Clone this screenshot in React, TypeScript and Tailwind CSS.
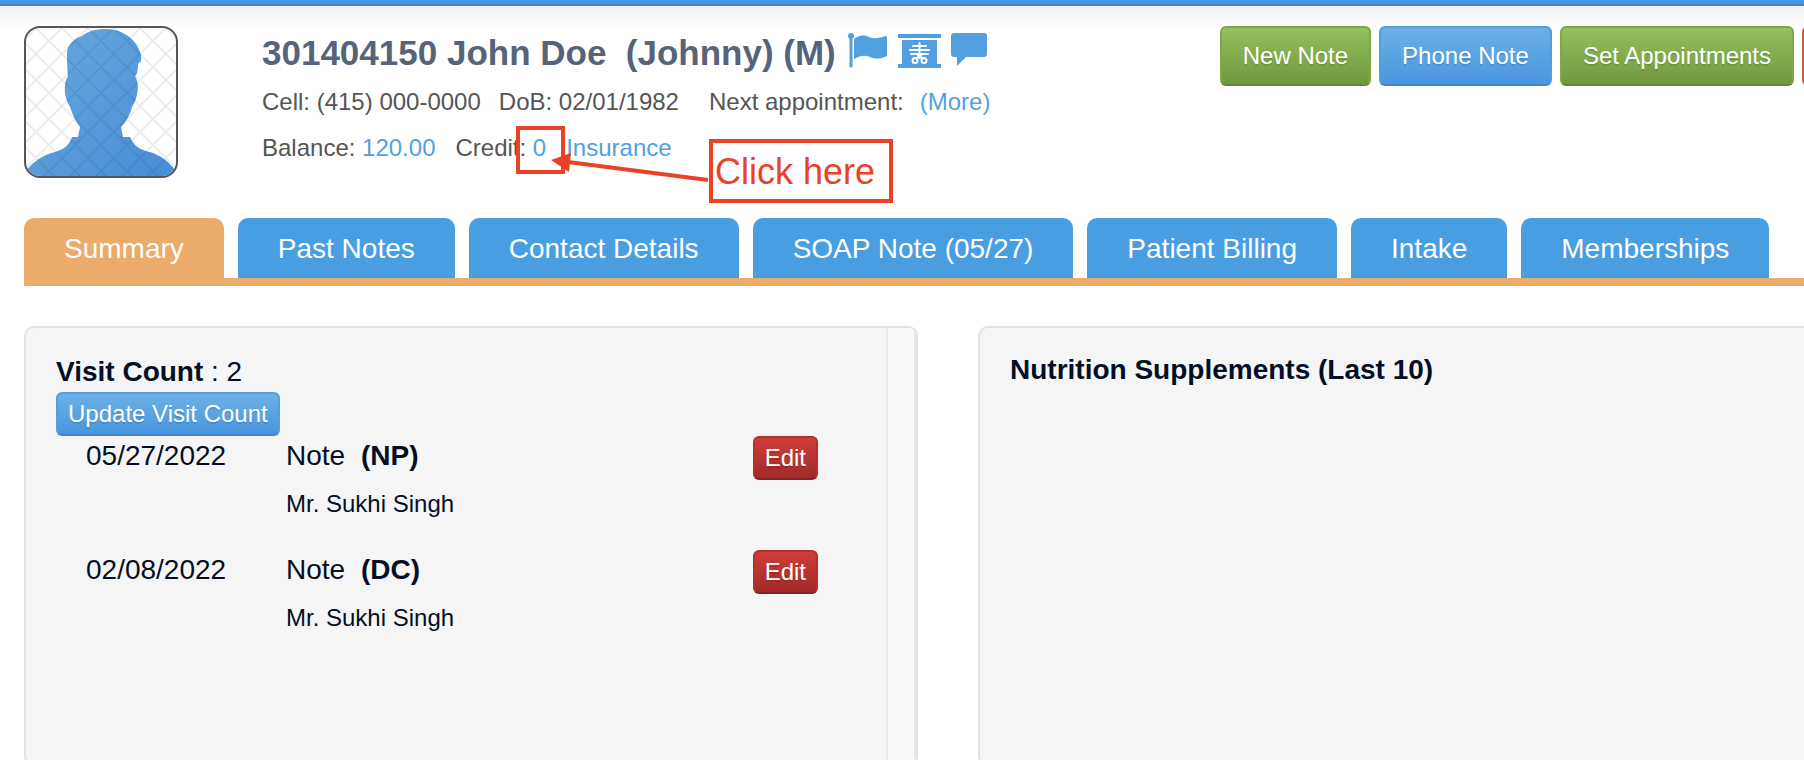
// src/App.tsx
import { useState } from 'react';
import type { ReactNode } from 'react';

const tabs = [
  'Summary',
  'Past Notes',
  'Contact Details',
  'SOAP Note (05/27)',
  'Patient Billing',
  'Intake',
  'Memberships',
];

const visits = [
  { date: '05/27/2022', type: 'NP', provider: 'Mr. Sukhi Singh' },
  { date: '02/08/2022', type: 'DC', provider: 'Mr. Sukhi Singh' },
];

const colors = {
  green: 'border-[#7ea64a] border-b-[#63843b] from-[#96c05d] to-[#70973f]',
  blue: 'border-[#529fe0] border-b-[#3f86cc] from-[#6db0e6] to-[#4896de]',
  red: 'border-[#b5302d] border-b-[#862220] from-[#d03d3a] to-[#a02a28]',
  orange: 'border-[#d2602c] border-b-[#a84620] from-[#e0703f] to-[#c4521f]',
};

interface ActionButtonProps {
  color: keyof typeof colors;
  size?: 'sm' | 'lg';
  label?: string;
  children?: ReactNode;
}

function ActionButton({ color, size = 'lg', label, children }: ActionButtonProps) {
  const sizing = size === 'lg' ? 'h-[60px] min-w-[70px] px-[21px]' : 'h-11 px-[10px]';
  return (
    <button
      type="button"
      aria-label={label}
      className={`shrink-0 whitespace-nowrap rounded-md border-2 bg-linear-to-b text-2xl leading-8 text-white text-shadow-[0_2px_0_rgba(0,0,0,0.12)] ${sizing} ${colors[color]}`}
    >
      {children}
    </button>
  );
}

function Avatar() {
  return (
    <div className="h-[152px] w-[154px] shrink-0 overflow-hidden rounded-2xl border-2 border-[#555555] bg-white">
      <svg viewBox="0 0 150 148" className="h-full w-full" role="img" aria-label="Patient photo">
        <defs>
          <linearGradient id="avatarFill" x1="0" y1="0" x2="1" y2="1">
            <stop offset="0" stopColor="#67a9de" />
            <stop offset="1" stopColor="#478dd6" />
          </linearGradient>
          <pattern id="avatarGrid" width="26" height="26" patternUnits="userSpaceOnUse" x="10" y="0">
            <path d="M0 0L26 26M26 0L0 26" stroke="#000" strokeOpacity="0.07" strokeWidth="2" />
          </pattern>
        </defs>
        <path
          d="M1 148V142C8 133 17 127 29 124C39 121 43 117 46 109H52L54 99C49 93 46 85 44 79C38 70 37 55 42 48C41 40 41 30 41 24C42 15 50 10 56 8C63 2 72 1 80 1C92 1 104 7 110 16C114 22 116 29 115 33L112 36C112 42 111 47 109 48C114 56 112 70 106 79C104 87 100 94 95 99L97 109H104C108 118 114 122 124 124C136 128 143 134 149 142V148Z"
          fill="url(#avatarFill)"
        />
        <rect width="150" height="148" fill="url(#avatarGrid)" />
      </svg>
    </div>
  );
}

function FlagIcon() {
  return (
    <svg viewBox="0 0 40 36" className="h-9 w-10" fill="currentColor" aria-hidden="true">
      <circle cx="3" cy="3" r="3" />
      <rect x="1.5" y="3" width="3" height="31.5" rx="1" />
      <path d="M6 6C10 3 15 1 21 4C27 6.500 32 5 37 3Q39 2.500 39 5V23C33 26 28 26.500 22 24C16 21.500 11 23 6 26Z" />
    </svg>
  );
}

function XrayIcon() {
  return (
    <svg viewBox="0 0 43 36" className="h-9 w-[43px]" aria-hidden="true">
      <path d="M0 1H43V5H0ZM4 7H39V31H43V35H0V31H4Z" fill="currentColor" />
      <g fill="none" stroke="#fff" strokeLinecap="round" strokeWidth="2">
        <path d="M21.5 10V25M15 13H28M12 17H31M13 21H30" />
        <path d="M20 21V24Q20 25 18 25M23 21V24Q23 25 25 25" />
        <circle cx="17" cy="27.5" r="2.500" />
        <circle cx="26" cy="27.5" r="2.500" />
      </g>
    </svg>
  );
}

function CommentIcon() {
  return (
    <svg viewBox="0 0 36 36" className="h-9 w-9" fill="currentColor" aria-hidden="true">
      <path d="M3 0H33Q36 0 36 3V21Q36 24 33 24H15L6 33V24H3Q0 24 0 21V3Q0 0 3 0Z" />
    </svg>
  );
}

function ClickHint() {
  return (
    <div className="pointer-events-none text-[#ea4226]">
      <div className="absolute top-[100px] left-[254px] h-12 w-[49px] border-4 border-current" />
      <svg viewBox="0 0 160 32" className="absolute top-[126px] left-[288px] h-8 w-40" aria-hidden="true">
        <path d="M18 10L158 28" stroke="currentColor" strokeWidth="4" />
        <path d="M1 8L21 1L19 20Z" fill="currentColor" />
      </svg>
      <div className="absolute top-[113px] left-[447px] h-16 w-[184px] border-4 border-current pl-[2px] text-4xl leading-[58px] whitespace-nowrap">
        Click here
      </div>
    </div>
  );
}

export default function App() {
  const [activeTab, setActiveTab] = useState('Summary');

  return (
    <div className="h-screen overflow-hidden bg-white font-['Liberation_Sans',Arial,sans-serif] text-[#040f26]">
      <div className="h-[6px] border-b-2 border-[#3f86cc] bg-[#4a98df]" />

      <div className="bg-linear-to-b from-[#f0f0f0] to-white to-[22px] pt-5 pl-6">
        {/* Content runs past the right edge of the window */}
        <div className="-mr-[68px]">
          <header className="flex items-start">
            <Avatar />

            <div className="relative ml-[84px] whitespace-nowrap text-[#555555]">
              <div className="flex items-center gap-3">
                <h1 className="text-[35px] leading-[53px] font-bold whitespace-pre text-[#56647a]">
                  301404150 John Doe{'  '}(Johnny) (M)
                </h1>
                <div className="flex gap-[10px] pb-1 text-[#529fe0]">
                  <a href="#flag" aria-label="Flag"><FlagIcon /></a>
                  <a href="#xray" aria-label="X-rays"><XrayIcon /></a>
                  <a href="#message" aria-label="Message"><CommentIcon /></a>
                </div>
              </div>
              <div className="flex text-2xl leading-[46px]">
                <span>Cell: (415) 000-0000</span>
                <span className="ml-[18px]">DoB: 02/01/1982</span>
                <span className="ml-[30px]">Next appointment:</span>
                <a href="#more" className="ml-4 text-[#529fe0]">(More)</a>
              </div>
              <div className="flex text-2xl leading-[46px]">
                <span>
                  Balance: <a href="#balance" className="text-[#529fe0]">120.00</a>
                </span>
                <span className="ml-5">
                  Credit: <a href="#credit" className="text-[#529fe0]">0</a>
                </span>
                <a href="#insurance" className="ml-5 text-[#529fe0]">Insurance</a>
              </div>
              <ClickHint />
            </div>

            <div className="ml-auto flex gap-2">
              <ActionButton color="green">New Note</ActionButton>
              <ActionButton color="blue">Phone Note</ActionButton>
              <ActionButton color="green">Set Appointments</ActionButton>
              <ActionButton color="orange" label="More actions" />
            </div>
          </header>

          <nav className="mt-10 flex gap-[14px] border-b-8 border-[#ebab6b]">
            {tabs.map((tab) => (
              <button
                key={tab}
                type="button"
                onClick={() => setActiveTab(tab)}
                className={`h-[60px] shrink-0 whitespace-nowrap rounded-t-[10px] px-10 text-[28px] leading-[62px] text-white ${
                  activeTab === tab ? 'bg-[#ebab6b]' : 'bg-[#499ee2]'
                }`}
              >
                {tab}
              </button>
            ))}
          </nav>

          <main className="mt-10 grid grid-cols-2 gap-[60px] text-[28px] leading-10">
            {/* Visits */}
            <section className="flex h-[440px] overflow-hidden rounded-[10px] border-2 border-[#e2e2e2] bg-[#f5f5f5]">
              <div className="flex-1 pt-6 pl-[30px]">
                <h2>
                  <strong>Visit Count</strong> : 2
                </h2>
                <div className="flex">
                  <ActionButton color="blue" size="sm">Update Visit Count</ActionButton>
                </div>
                {visits.map((visit) => (
                  <div key={visit.date} className="flex h-[114px] items-start pr-[68px] pl-[30px]">
                    <div className="w-[200px]">{visit.date}</div>
                    <div className="flex-1">
                      <div>
                        Note <strong className="ml-2">({visit.type})</strong>
                      </div>
                      <div className="mt-2 text-2xl leading-10">{visit.provider}</div>
                    </div>
                    <ActionButton color="red" size="sm">Edit</ActionButton>
                  </div>
                ))}
              </div>
              {/* Scrollbar track */}
              <div className="w-[30px] border-x-2 border-[#e8e8e8] bg-[#fafafa]" />
            </section>

            {/* Supplements */}
            <section className="h-[440px] rounded-[10px] border-2 border-[#e2e2e2] bg-[#f5f5f5] px-[30px] pt-[22px]">
              <h2 className="font-bold">Nutrition Supplements (Last 10)</h2>
            </section>
          </main>
        </div>
      </div>
    </div>
  );
}
